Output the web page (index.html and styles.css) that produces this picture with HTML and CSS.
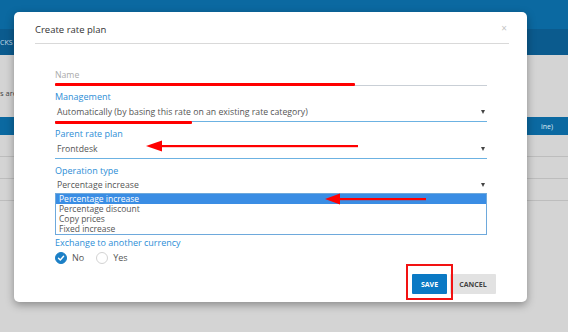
FILE: index.html
```html
<!DOCTYPE html>
<html lang="en">
<head>
    <meta charset="UTF-8">
    <meta name="viewport" content="width=device-width, initial-scale=1.0">
    <title>Create rate plan</title>
    <link rel="stylesheet" href="styles.css">
</head>
<body>
    <div class="topbar"></div>
    <nav class="subnav"><span class="tab">CKS</span></nav>
    <main class="content">
        <p class="intro">s are</p>
        <div class="grid">
            <div class="grid-head"><span></span><span class="col-last">ine)</span></div>
            <div class="grid-row"></div>
            <div class="grid-row"></div>
            <div class="grid-row"></div>
        </div>
    </main>

    <div class="modal">
        <div class="modal-head">
            <h2 class="modal-title">Create rate plan</h2>
            <span class="close">&times;</span>
        </div>
        <div class="modal-body">
            <div class="text-field">
                <span class="placeholder">Name</span>
                <span class="mark mark-name"></span>
            </div>
            <div class="field">
                <label>Management</label>
                <div class="select">
                    <span>Automatically (by basing this rate on an existing rate category)</span>
                    <span class="caret"></span>
                    <span class="mark mark-manage"></span>
                </div>
            </div>
            <div class="field">
                <label>Parent rate plan</label>
                <div class="select">
                    <span>Frontdesk</span>
                    <span class="caret"></span>
                </div>
                <svg class="arrow arrow-parent" width="212" height="12" viewBox="0 0 212 12">
                    <polygon points="0,6 16,0.5 16,11.5" fill="#f00"/>
                    <rect x="14" y="5" width="198" height="2.2" fill="#f00"/>
                </svg>
            </div>
            <div class="field field-open">
                <label>Operation type</label>
                <div class="select select-open">
                    <span>Percentage increase</span>
                    <span class="caret"></span>
                </div>
                <ul class="listbox">
                    <li class="selected">Percentage increase</li>
                    <li>Percentage discount</li>
                    <li>Copy prices</li>
                    <li>Fixed increase</li>
                </ul>
                <svg class="arrow arrow-op" width="101" height="12" viewBox="0 0 101 12">
                    <polygon points="0,6 15,0.5 15,11.5" fill="#f00"/>
                    <rect x="13" y="5" width="88" height="2.2" fill="#f00"/>
                </svg>
            </div>
            <div class="field field-last">
                <label>Exchange to another currency</label>
                <div class="radios">
                    <span class="radio checked">
                        <svg width="8" height="8" viewBox="0 0 8 8"><path d="M1.5 4.2 L3.3 6 L6.6 2.2" fill="none" stroke="#fff" stroke-width="1.4" stroke-linecap="round" stroke-linejoin="round"/></svg>
                    </span>
                    <span class="radio-label">No</span>
                    <span class="radio"></span>
                    <span class="radio-label">Yes</span>
                </div>
            </div>
        </div>
        <div class="modal-foot">
            <span class="save-wrap">
                <button class="btn btn-save">SAVE</button>
            </span>
            <button class="btn btn-cancel">CANCEL</button>
        </div>
    </div>
</body>
</html>
```

FILE: styles.css
```css
body {
    margin: 0;
    width: 568px;
    height: 332px;
    overflow: hidden;
    position: relative;
    background-color: #d4d4d4;
    font-family: "Open Sans", "Liberation Sans", sans-serif;
    color: #555;
}
.topbar {
    height: 29px;
    background-color: #0b69a1;
}
.subnav {
    height: 26px;
    background-color: #0b5b8e;
    display: flex;
    align-items: center;
}
.tab {
    color: #c8dbe9;
    font-size: 7px;
}
.content {
    padding-top: 33px;
}
.intro {
    margin: 0;
    font-size: 7.5px;
    line-height: 10px;
    color: #444;
}
.grid {
    margin-top: 19px;
}
.grid-head {
    height: 18px;
    background-color: #0b69a1;
    display: grid;
    grid-template-columns: 1fr 27px;
    align-items: center;
    color: #dce9f3;
    font-size: 7px;
}
.grid-row {
    height: 21px;
    border-bottom: 1px solid #bdbdbd;
}

/* dialog */
.modal {
    position: absolute;
    top: 12px;
    left: 14px;
    width: 513px;
    background-color: #fff;
    border-radius: 5px;
    box-shadow: 0 3px 8px rgba(0, 0, 0, 0.35);
}
.modal-head {
    margin: 0 18px 0 21px;
    padding: 12px 0 7px;
    border-bottom: 1px solid #d9d9d9;
    display: flex;
    justify-content: space-between;
    align-items: center;
}
.modal-title {
    margin: 0;
    font-size: 9.5px;
    font-weight: normal;
    line-height: 12px;
    color: #333;
}
.close {
    font-size: 10px;
    line-height: 12px;
    color: #c4c4c4;
    margin-right: 2px;
    margin-top: -4px;
}
.modal-body {
    padding: 22px 40px 0 41px;
}
.text-field {
    position: relative;
    height: 19px;
    line-height: 19px;
    border-bottom: 1px solid #c9cfd6;
    margin-bottom: 5px;
    font-size: 8.7px;
}
.placeholder {
    color: #aaa;
}
.mark {
    position: absolute;
    left: 0;
    height: 2.5px;
    background-color: #f00;
    border-radius: 1px;
}
.mark-name {
    width: 300px;
    bottom: -0.5px;
}
.mark-manage {
    width: 137px;
    bottom: -2.5px;
}
.field {
    position: relative;
    margin-bottom: 6px;
}
.field label {
    display: block;
    font-size: 9px;
    line-height: 12px;
    color: #2d8ed6;
}
.select {
    position: relative;
    height: 18px;
    line-height: 18px;
    padding: 0 2px 0 2px;
    border-bottom: 1px solid #6cb2e2;
    display: flex;
    justify-content: space-between;
    align-items: center;
    font-size: 8.7px;
    color: #555;
}
.select-open {
    height: 16px;
    line-height: 16px;
    border-bottom: none;
}
.caret {
    width: 0;
    height: 0;
    border-left: 2.5px solid transparent;
    border-right: 2.5px solid transparent;
    border-top: 4px solid #444;
}
.field-open {
    margin-bottom: 2px;
}
.listbox {
    list-style: none;
    margin: 0;
    padding: 0;
    border: 1px solid #6ea9dc;
    font-size: 8.5px;
    color: #555;
}
.listbox li {
    height: 10px;
    line-height: 10px;
    padding: 0 3px;
}
.listbox .selected {
    background-color: #3a8de4;
    color: #fff;
}
.arrow {
    position: absolute;
}
.arrow-parent {
    left: 91px;
    top: 12px;
}
.arrow-op {
    left: 270px;
    top: 28px;
}
.field-last {
    margin-bottom: 0;
}
.radios {
    height: 17px;
    display: flex;
    align-items: center;
}
.radio {
    width: 12px;
    height: 12px;
    box-sizing: border-box;
    border-radius: 50%;
    border: 1px solid #d3d3d3;
    display: flex;
    align-items: center;
    justify-content: center;
}
.radio.checked {
    background-color: #1b7fc6;
    border-color: #1b7fc6;
}
.radio-label {
    font-size: 9px;
    margin: 0 12px 0 5px;
    color: #555;
}
.modal-foot {
    display: flex;
    justify-content: flex-end;
    align-items: flex-start;
    gap: 3px;
    padding: 8px 31px 8px 0;
}
.btn {
    height: 20px;
    border: none;
    border-radius: 1px;
    font-family: "Open Sans", "Liberation Sans", sans-serif;
    font-size: 7px;
    font-weight: bold;
    padding: 0;
    cursor: pointer;
}
.save-wrap {
    position: relative;
}
.save-wrap::after {
    content: "";
    position: absolute;
    top: -10px;
    left: -6px;
    right: -6px;
    bottom: -6px;
    border: 2.5px solid #f21212;
    z-index: 2;
}
.btn-save {
    width: 35px;
    background-color: #0a79c4;
    color: #fff;
    display: block;
}
.btn-cancel {
    width: 46px;
    background-color: #e2e2e2;
    color: #444;
}
```
